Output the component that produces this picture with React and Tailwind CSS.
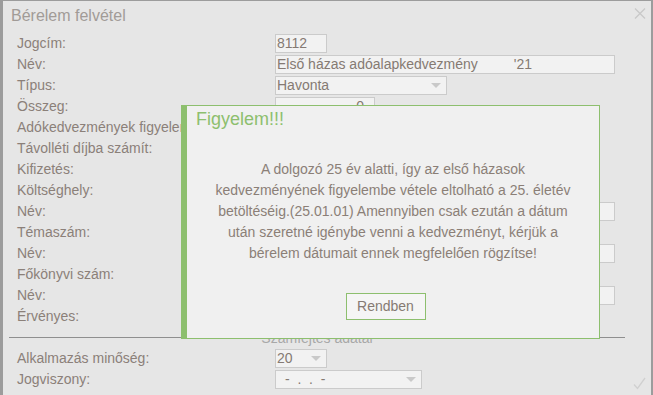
import React from "react";

const font = { fontFamily: '"Liberation Sans", Arial, sans-serif' };

function Arrow() {
  return (
    <svg width="10" height="6" viewBox="0 0 10 6" className="shrink-0">
      <path d="M0 0 L10 0 L5 5 Z" fill="#c9c9c9" />
    </svg>
  );
}

// input-like box
function Field({ w, children, select, right, pre }) {
  return (
    <div
      className={`mt-[1px] h-[19px] border border-[#cbcbcb] bg-[#f2f2f2] flex items-center text-[14px] leading-[17px] text-[#857a73] ${
        right ? "justify-end pr-[10px]" : "pl-[1px]"
      } ${select ? "justify-between pr-[5px]" : ""} ${pre ? "whitespace-pre" : ""}`}
      style={{ width: w }}
    >
      {children}
      {select && <Arrow />}
    </div>
  );
}

const rows = [
  ["Jogcím:", <Field w={52}>8112</Field>],
  [
    "Név:",
    <Field w={340}>
      <span>Első házas adóalapkedvezmény</span>
      <span className="ml-[36px]">'21</span>
    </Field>,
  ],
  ["Típus:", <Field w={172} select><span>Havonta</span></Field>],
  ["Összeg:", <Field w={100} right>0</Field>],
  ["Adókedvezmények figyelembe vétele:", null],
  ["Távolléti díjba számít:", null],
  ["Kifizetés:", null],
  ["Költséghely:", <Field w={80} />],
  ["Név:", <Field w={340} />],
  ["Témaszám:", <Field w={80} />],
  ["Név:", <Field w={340} />],
  ["Főkönyvi szám:", <Field w={80} />],
  ["Név:", <Field w={340} />],
  ["Érvényes:", null],
];

export default function App() {
  return (
    <div
      className="relative w-[653px] h-[395px] overflow-hidden bg-[#e6e6e6] border-t border-l-[3px] border-r-2 border-[#9c9c9c]"
      style={font}
    >
      {/* header */}
      <div className="h-[32px] flex items-start justify-between pl-[8px] pr-[5px]">
        <div className="mt-[5px] text-[16px] leading-[19px] text-[#a19b97]">Bérelem felvétel</div>
        <svg width="12" height="11" viewBox="0 0 12 11" className="mt-[7px]">
          <path d="M1 0.5 L11 10.5 M11 0.5 L1 10.5" stroke="#c8c8c8" strokeWidth="1.3" />
        </svg>
      </div>

      {/* form rows */}
      <div className="pl-[14px] text-[14px] text-[#8b8079]">
        {rows.map(([label, field], i) => (
          <div key={i} className="grid grid-cols-[258px_1fr] h-[21px]">
            <div className="leading-[21px] whitespace-nowrap">{label}</div>
            <div>{field}</div>
          </div>
        ))}
      </div>

      {/* section separator */}
      <div className="ml-[6px] mr-[26px] mt-[10px] h-px bg-[#8f8f8f]" />
      <div className="ml-[6px] mr-[26px] -mt-[8px] text-center text-[14px] leading-[16px] text-[#a8a8a8]">
        Számfejtés adatai
      </div>

      <div className="mt-[2px] pl-[14px] text-[14px] text-[#8b8079]">
        <div className="grid grid-cols-[258px_1fr] h-[21px]">
          <div className="leading-[21px]">Alkalmazás minőség:</div>
          <Field w={52} select><span>20</span></Field>
        </div>
        <div className="grid grid-cols-[258px_1fr] h-[21px]">
          <div className="leading-[21px]">Jogviszony:</div>
          <div className="flex justify-between pr-[5px]">
            <Field w={147} select pre><span className="pl-[8px]">-  .  .  -</span></Field>
            <svg width="13" height="13" viewBox="0 0 13 13" className="mt-[8px]">
              <path d="M1 7.5 L4.5 11.5 L12 1" fill="none" stroke="#d0d0d0" strokeWidth="1.3" />
            </svg>
          </div>
        </div>
      </div>

      {/* alert dialog */}
      <div className="absolute left-[178px] top-[104px] w-[419px] h-[234px] bg-[#f0f0f0] border border-l-[6px] border-[#8dbf6e] px-[9px]">
        <div className="mt-[3px] text-[18px] leading-[21px] text-[#8dbf6e]">Figyelem!!!</div>
        <div className="mt-[29px] text-center text-[14px] leading-[21px] text-[#8b7f77]">
          A dolgozó 25 év alatti, így az első házasok
          <br />
          kedvezményének figyelembe vétele eltolható a 25. életév
          <br />
          betöltéséig.(25.01.01) Amennyiben csak ezután a dátum
          <br />
          után szeretné igénybe venni a kedvezményt, kérjük a
          <br />
          bérelem dátumait ennek megfelelően rögzítse!
        </div>
        <div className="mt-[29px] flex justify-center pr-[15px]">
          <button className="w-[80px] h-[27px] border border-[#8dbf6e] bg-[#f5f5f5] text-[14px] text-[#857a73]">
            Rendben
          </button>
        </div>
      </div>
    </div>
  );
}
